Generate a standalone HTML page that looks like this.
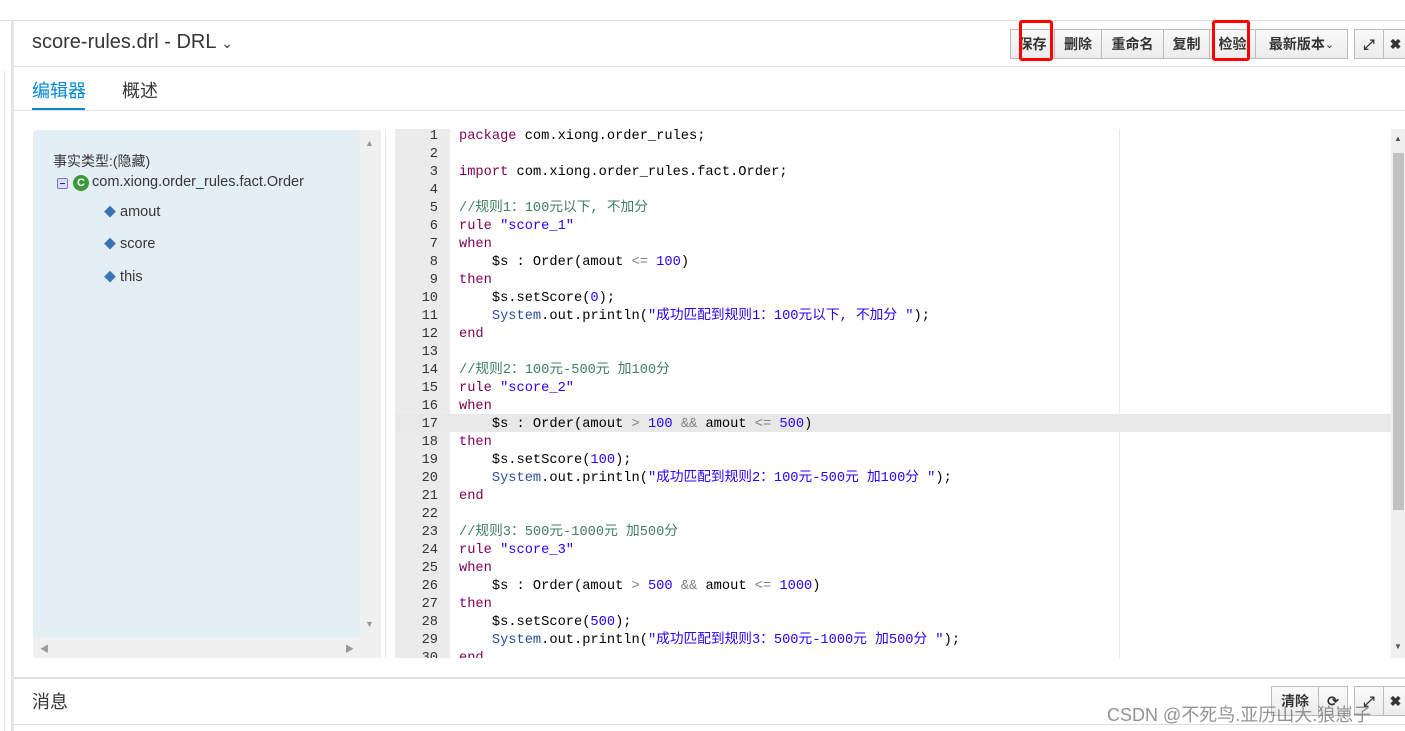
<!DOCTYPE html>
<html><head><meta charset="utf-8"><style>
*{margin:0;padding:0;box-sizing:border-box}
body{width:1405px;height:731px;overflow:hidden;background:#fff;position:relative;font-family:"Liberation Sans","Noto Sans CJK SC",sans-serif;color:#363636}
.abs{position:absolute}
.btn{position:absolute;top:29px;height:30px;border:1px solid #bbb;background:linear-gradient(#fafafa,#ececec);font-size:14px;font-weight:bold;color:#333;display:flex;align-items:center;justify-content:center}
.red{position:absolute;border:3px solid #f00;border-radius:3px}
.code{position:absolute;left:459px;top:128px;font-family:"Liberation Mono","Noto Sans CJK SC",monospace;font-size:13.7px;line-height:18px;white-space:pre;color:#000}
.nums{position:absolute;left:395px;top:128px;width:43px;text-align:right;font-family:"Liberation Mono",monospace;font-size:13.7px;line-height:18px;color:#333;white-space:pre}
.k{color:#7f0055}.s{color:#2a00ff}.c{color:#3f7f5f}.n{color:#2a00ff}.g{color:#808080}.f{color:#2a4fa0}
</style></head><body>
<div class="abs" style="left:0;top:20px;width:1405px;height:1px;background:#ddd"></div>
<div class="abs" style="left:11px;top:20px;width:3px;height:711px;background:#e5e5e5"></div>
<div class="abs" style="left:0;top:70px;width:5px;height:661px;border-right:1px solid #e5e5e5"></div>
<div class="abs" style="left:32px;top:31px;font-size:20px;color:#363636">score-rules.drl - DRL <span style="font-size:14px">&#8964;</span></div>
<div class="abs" style="left:14px;top:66px;width:1391px;height:1px;background:#e0e0e0"></div>
<div class="btn" style="left:1010px;width:45px">保存</div>
<div class="btn" style="left:1054px;width:48px">删除</div>
<div class="btn" style="left:1101px;width:63px">重命名</div>
<div class="btn" style="left:1163px;width:47px">复制</div>
<div class="btn" style="left:1209px;width:47px">检验</div>
<div class="btn" style="left:1255px;width:93px">最新版本 <span style="font-weight:normal;font-size:11px">&#8964;</span></div>
<div class="btn" style="left:1354px;width:30px">&#10530;</div>
<div class="btn" style="left:1383px;width:25px">&#10006;</div>
<div class="red" style="left:1019px;top:20px;width:34px;height:41px"></div>
<div class="red" style="left:1212px;top:20px;width:38px;height:41px"></div>
<div class="abs" style="left:32px;top:77px;font-size:18px;color:#0088ce">编辑器</div>
<div class="abs" style="left:32px;top:108px;width:53px;height:3px;background:#0088ce"></div>
<div class="abs" style="left:122px;top:77px;font-size:18px;color:#363636">概述</div>
<div class="abs" style="left:14px;top:110px;width:1391px;height:1px;background:#e5e5e5"></div>
<div class="abs" style="left:33px;top:130px;width:327px;height:528px;background:#e4eff5;border-radius:3px 0 0 3px"></div>
<div class="abs" style="left:360px;top:130px;width:21px;height:528px;background:#f0f0f0"></div>
<div class="abs" style="left:33px;top:637px;width:327px;height:21px;background:#f0f0f0"></div>
<div class="abs" style="left:365px;top:138px;color:#999;font-size:9px">▲</div>
<div class="abs" style="left:365px;top:619px;color:#999;font-size:9px">▼</div>
<div class="abs" style="left:40px;top:642px;color:#999;font-size:9px">◀</div>
<div class="abs" style="left:345px;top:642px;color:#999;font-size:9px">▶</div>
<div class="abs" style="left:53px;top:151px;font-size:14px">事实类型:(隐藏)</div>
<div class="abs" style="left:57px;top:178px;width:11px;height:11px;border:1px solid #7a7ab8;background:#dde;border-radius:2px"><div style="margin:4px 2px;height:1px;background:#22a"></div></div>
<div class="abs" style="left:73px;top:175px;width:16px;height:16px;border-radius:50%;background:#3a9a3a;color:#fff;font-size:11px;font-weight:bold;text-align:center;line-height:16px">C</div>
<div class="abs" style="left:92px;top:174px;font-size:14.5px">com.xiong.order_rules.fact.Order</div>
<div class="abs" style="left:104px;top:203px;font-size:14.5px"><span style="color:#3b74b4;font-size:12px">◆</span> amout</div>
<div class="abs" style="left:104px;top:235px;font-size:14.5px"><span style="color:#3b74b4;font-size:12px">◆</span> score</div>
<div class="abs" style="left:104px;top:268px;font-size:14.5px"><span style="color:#3b74b4;font-size:12px">◆</span> this</div>
<div class="abs" style="left:385px;top:130px;width:1px;height:528px;background:#e5e5e5"></div>
<div class="abs" style="left:395px;top:129px;width:55px;height:529px;background:#ebebeb"></div>
<div class="abs" style="left:395px;top:414px;width:996px;height:18px;background:#e8e8e8"></div>
<div class="abs" style="left:1119px;top:129px;width:1px;height:529px;background:#e8e8e8"></div>
<div class="abs" style="left:1391px;top:129px;width:14px;height:529px;background:#f0f0f0"></div>
<div class="abs" style="left:1393px;top:153px;width:11px;height:357px;background:#c1c1c1"></div>
<div class="abs" style="left:1394px;top:134px;color:#555;font-size:8px">▲</div>
<div class="abs" style="left:1394px;top:642px;color:#555;font-size:8px">▼</div>
<div class="nums" style="height:530px;overflow:hidden">1
2
3
4
5
6
7
8
9
10
11
12
13
14
15
16
17
18
19
20
21
22
23
24
25
26
27
28
29
30</div>
<div class="code" style="height:530px;overflow:hidden"><span class="k">package</span> com.xiong.order_rules;

<span class="k">import</span> com.xiong.order_rules.fact.Order;

<span class="c">//规则1：100元以下, 不加分</span>
<span class="k">rule</span> <span class="s">"score_1"</span>
<span class="k">when</span>
    $s : Order(amout <span class="g">&lt;=</span> <span class="n">100</span>)
<span class="k">then</span>
    $s.setScore(<span class="n">0</span>);
    <span class="f">System</span>.out.println(<span class="s">"成功匹配到规则1：100元以下, 不加分 "</span>);
<span class="k">end</span>

<span class="c">//规则2：100元-500元 加100分</span>
<span class="k">rule</span> <span class="s">"score_2"</span>
<span class="k">when</span>
    $s : Order(amout <span class="g">&gt;</span> <span class="n">100</span> <span class="g">&amp;&amp;</span> amout <span class="g">&lt;=</span> <span class="n">500</span>)
<span class="k">then</span>
    $s.setScore(<span class="n">100</span>);
    <span class="f">System</span>.out.println(<span class="s">"成功匹配到规则2：100元-500元 加100分 "</span>);
<span class="k">end</span>

<span class="c">//规则3：500元-1000元 加500分</span>
<span class="k">rule</span> <span class="s">"score_3"</span>
<span class="k">when</span>
    $s : Order(amout <span class="g">&gt;</span> <span class="n">500</span> <span class="g">&amp;&amp;</span> amout <span class="g">&lt;=</span> <span class="n">1000</span>)
<span class="k">then</span>
    $s.setScore(<span class="n">500</span>);
    <span class="f">System</span>.out.println(<span class="s">"成功匹配到规则3：500元-1000元 加500分 "</span>);
<span class="k">end</span></div>
<div class="abs" style="left:14px;top:677px;width:1391px;height:2px;background:#ddd"></div>
<div class="abs" style="left:32px;top:688px;font-size:18px">消息</div>
<div class="abs" style="left:14px;top:724px;width:1391px;height:1px;background:#ddd"></div>
<div class="btn" style="left:1271px;top:686px;width:48px">清除</div>
<div class="btn" style="left:1318px;top:686px;width:30px">&#10227;</div>
<div class="btn" style="left:1354px;top:686px;width:30px">&#10530;</div>
<div class="btn" style="left:1383px;top:686px;width:25px">&#10006;</div>
<div class="abs" style="left:1107px;top:701px;font-size:18px;color:rgba(120,120,120,0.8)">CSDN @不死鸟.亚历山大.狼崽子</div>
</body></html>
